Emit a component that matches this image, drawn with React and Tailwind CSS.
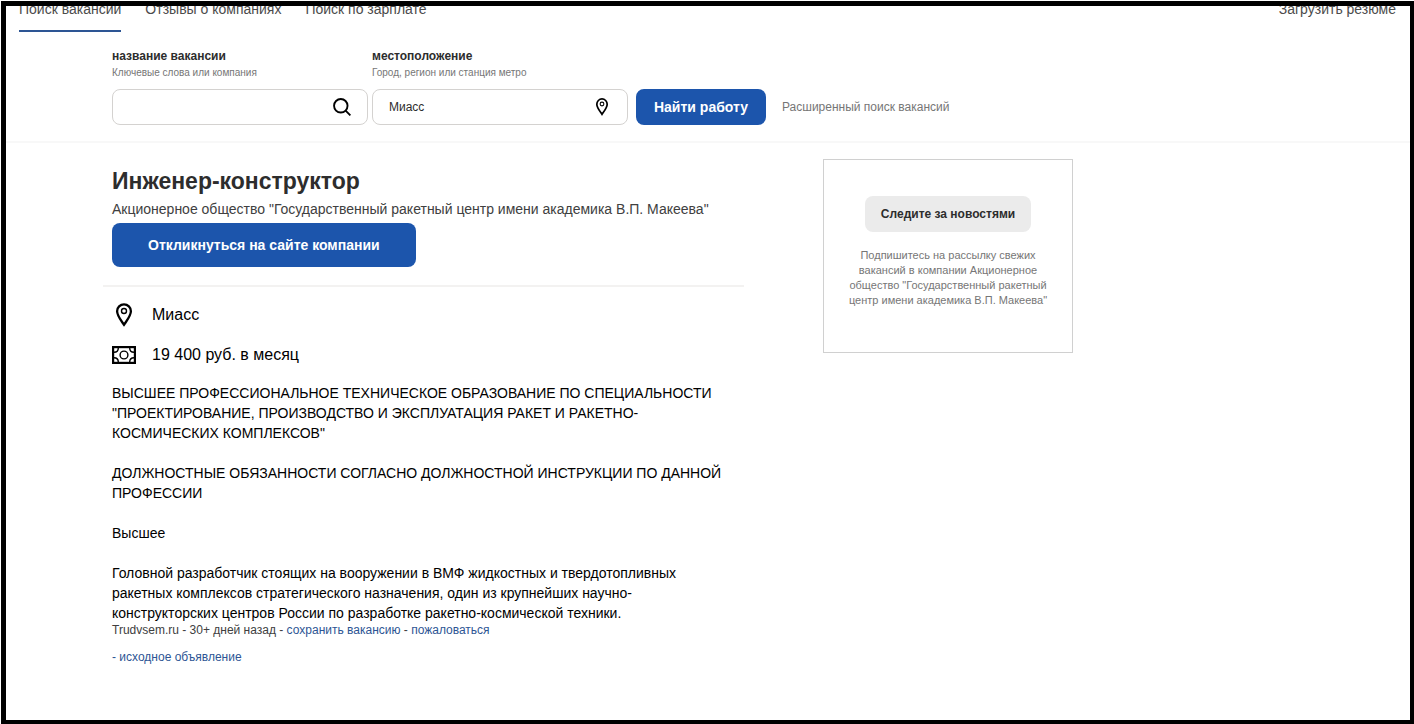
import React from 'react';

const navItems = [
  { label: 'Поиск вакансии', active: true },
  { label: 'Отзывы о компаниях' },
  { label: 'Поиск по зарплате' },
];

function SearchIcon({ className }) {
  return (
    <svg className={className} viewBox="0 0 24 24" fill="none" stroke="currentColor" strokeWidth="2.5" aria-hidden="true">
      <circle cx="10.4" cy="10.4" r="9" />
      <path d="M16.8 16.8l6.400 6.400" />
    </svg>
  );
}

function PinIcon({ className }) {
  return (
    <svg className={className} viewBox="0 0 24 24" fill="none" stroke="currentColor" aria-hidden="true">
      <path strokeWidth="2.3" d="M12 21.8C9 17.3 5.100 12.600 5.100 8.200a6.900 6.900 0 0 1 13.800 0c0 4.400-3.900 9.100-6.900 13.600z" />
      <circle cx="12" cy="8" r="2.5" strokeWidth="1.400" />
    </svg>
  );
}

function MoneyIcon({ className }) {
  return (
    <svg className={className} viewBox="0 0 24 24" fill="none" stroke="currentColor" aria-hidden="true">
      <rect x="1.100" y="4.100" width="21.800" height="15.800" strokeWidth="2.200" />
      <circle cx="12" cy="12" r="3.900" strokeWidth="1.400" />
      <path strokeWidth="1.400" d="M2 9.300c2.600 0 4.300-1.700 4.300-4.300M22 9.300c-2.600 0-4.300-1.700-4.300-4.300M2 14.700c2.600 0 4.300 1.700 4.300 4.300M22 14.700c-2.600 0-4.300 1.700-4.300 4.300" />
    </svg>
  );
}

function SearchField({ id, label, hint, value, icon }) {
  return (
    <div className="w-64">
      <label htmlFor={id} className="block">
        <span className="block text-xs font-bold text-[#2d2d2d]">{label}</span>
        <span className="mt-px block text-[10px] leading-4 text-[#767676]">{hint}</span>
      </label>
      <div className="mt-2 flex h-9 items-center rounded-lg border border-[#d4d2d0] px-4">
        <input id={id} type="text" defaultValue={value} className="min-w-0 flex-1 text-xs text-[#2d2d2d] outline-none" />
        {icon}
      </div>
    </div>
  );
}

function Header() {
  return (
    <nav className="flex h-[26px] items-end justify-between overflow-hidden pr-3.5 pl-[13px] text-sm text-[#4b4b4b]">
      <div className="flex gap-6">
        {navItems.map((item) => (
          <a
            key={item.label}
            href="#"
            className={item.active ? 'border-b-2 border-[#2d5594] pb-[11px]' : 'border-b-2 border-transparent pb-[11px]'}
          >
            {item.label}
          </a>
        ))}
      </div>
      <a href="#" className="border-b-2 border-transparent pb-[11px]">Загрузить резюме</a>
    </nav>
  );
}

function SearchBar() {
  return (
    <form className="flex items-end border-b-2 border-[#f8f8f8] pt-4 pb-4 pl-[106px]">
      <div className="flex gap-1">
        <SearchField
          id="what"
          label="название вакансии"
          hint="Ключевые слова или компания"
          value=""
          icon={<SearchIcon className="size-[18px] text-black" />}
        />
        <SearchField
          id="where"
          label="местоположение"
          hint="Город, регион или станция метро"
          value="Миасс"
          icon={<PinIcon className="size-[18px] text-black" />}
        />
      </div>
      <button type="button" className="ml-2 h-9 w-[130px] rounded-lg bg-[#1c55ac] text-sm font-bold text-white">
        Найти работу
      </button>
      <a href="#" className="ml-4 text-xs leading-9 text-[#767676]">Расширенный поиск вакансий</a>
    </form>
  );
}

function Vacancy() {
  return (
    <article className="w-full max-w-[641px] pt-[22px]">
      <div className="border-b-2 border-[#f3f2f1] px-[9px] pb-[18px]">
        <h1 className="text-[23px] leading-8 font-bold text-[#2d2d2d]">Инженер-конструктор</h1>
        <p className="pt-0.5 pb-1 text-sm text-[#404040]">
          Акционерное общество "Государственный ракетный центр имени академика В.П. Макеева"
        </p>
        <button type="button" className="h-11 rounded-lg bg-[#1c55ac] px-9 text-sm font-bold text-white">
          Откликнуться на сайте компании
        </button>
      </div>

      <div className="px-[9px] pt-4">
        <ul className="flex flex-col gap-4 text-base text-black">
          <li className="flex items-center gap-4">
            <PinIcon className="size-6" />
            Миасс
          </li>
          <li className="flex items-center gap-4">
            <MoneyIcon className="size-6" />
            19 400 руб. в месяц
          </li>
        </ul>

        <div className="mt-4 flex flex-col gap-5 text-sm text-black">
          <p>
            ВЫСШЕЕ ПРОФЕССИОНАЛЬНОЕ ТЕХНИЧЕСКОЕ ОБРАЗОВАНИЕ ПО СПЕЦИАЛЬНОСТИ
            "ПРОЕКТИРОВАНИЕ, ПРОИЗВОДСТВО И ЭКСПЛУАТАЦИЯ РАКЕТ И РАКЕТНО-КОСМИЧЕСКИХ КОМПЛЕКСОВ"
          </p>
          <p>ДОЛЖНОСТНЫЕ ОБЯЗАННОСТИ СОГЛАСНО ДОЛЖНОСТНОЙ ИНСТРУКЦИИ ПО ДАННОЙ ПРОФЕССИИ</p>
          <p>Высшее</p>
          <p>
            Головной разработчик стоящих на вооружении в ВМФ жидкостных и твердотопливных
            ракетных комплексов стратегического назначения, один из крупнейших научно-конструкторских
            центров России по разработке ракетно-космической техники.
          </p>
        </div>

        <p className="text-xs leading-[14px] text-[#404040]">
          Trudvsem.ru - 30+ дней назад - <a href="#" className="text-[#2d5594]">сохранить вакансию</a> -{' '}
          <a href="#" className="text-[#2d5594]">пожаловаться</a>
        </p>
        <p className="mt-3 text-xs text-[#2d5594]">
          - <a href="#">исходное объявление</a>
        </p>
      </div>
    </article>
  );
}

function FollowCard() {
  return (
    <aside className="mt-4 w-[250px] shrink-0 border border-[#d0d0d0] px-5 pt-9 pb-11 text-center">
      <button type="button" className="h-9 rounded-lg bg-[#ebebeb] px-4 text-xs font-bold text-[#2d2d2d]">
        Следите за новостями
      </button>
      <p className="mt-4 text-[11px] leading-[15px] text-[#767676]">
        Подпишитесь на рассылку свежих вакансий в компании Акционерное общество
        "Государственный ракетный центр имени академика В.П. Макеева"
      </p>
    </aside>
  );
}

export default function App() {
  return (
    <div className="flex min-h-screen bg-white pt-px pl-px font-['Liberation_Sans',Arial,sans-serif]">
      <div className="flex-1 border-4 border-t-5 border-l-5 border-black">
        <Header />
        <SearchBar />
        <main className="flex items-start gap-[79px] pl-[97px]">
          <Vacancy />
          <FollowCard />
        </main>
      </div>
    </div>
  );
}
